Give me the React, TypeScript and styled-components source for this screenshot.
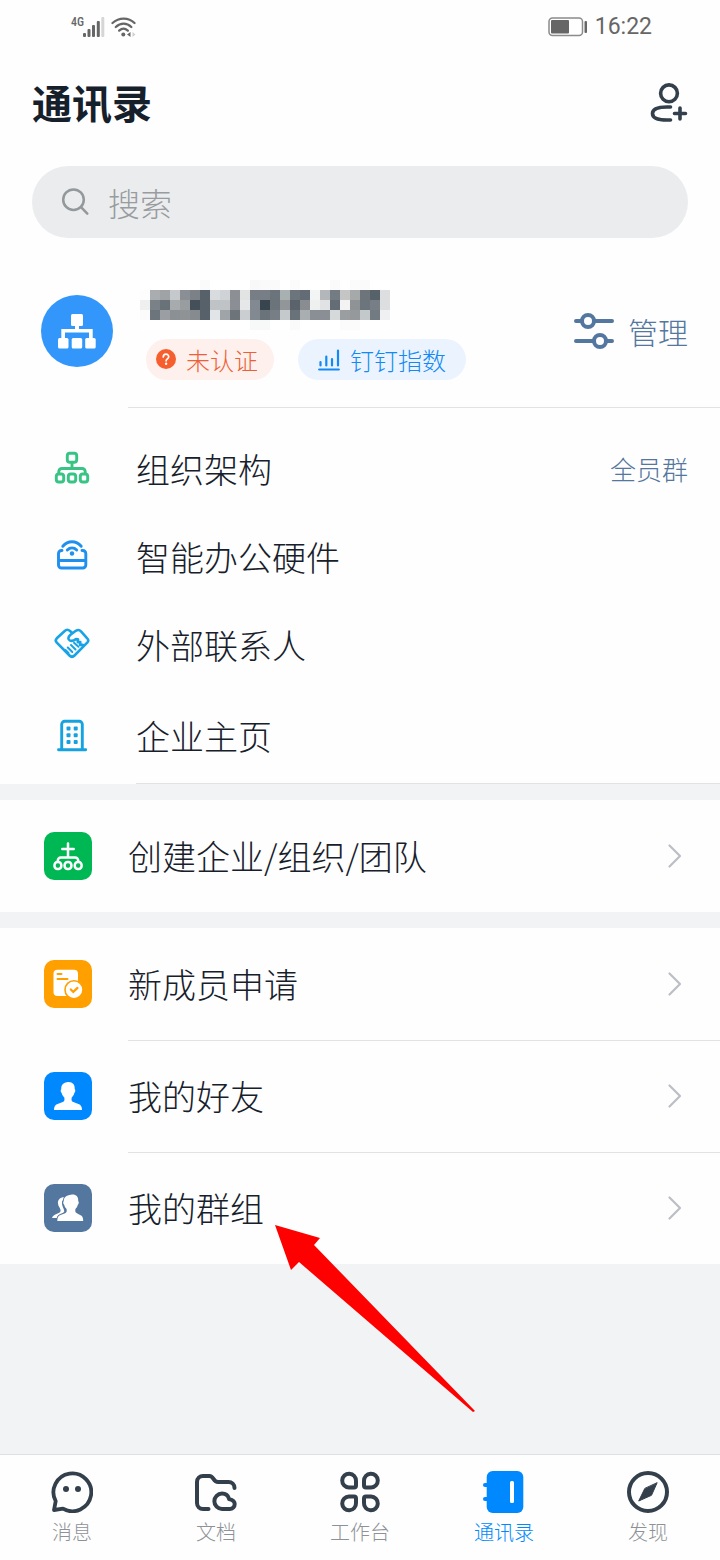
import React from "react";
import styled, { createGlobalStyle } from "styled-components";

const color = {
  ink: "#16202b",
  icon: "#333f4b",
  slate: "#53779f",
  muted: "#8e9296",
  blue: "#0089ff",
  line: "#e0e2e3",
  page: "#f2f3f5",
};

const GlobalStyle = createGlobalStyle`
  *, *::before, *::after { box-sizing: border-box; }
  body {
    margin: 0;
    background: ${color.page};
    color: ${color.ink};
    font-family: "Noto Sans CJK SC", Roboto, sans-serif;
    font-weight: 300;
  }
  button, input { font: inherit; color: inherit; }
  svg { display: block; flex: none; }
`;

const Page = styled.div`
  min-height: 100vh;
  display: flex;
  flex-direction: column;
`;

const Panel = styled.section`
  background: #fefefe;
`;

const StatusBar = styled.div`
  height: 54px;
  padding: 0 68px 0 71px;
  display: flex;
  align-items: center;
  justify-content: space-between;
  color: #666;
  font-family: Roboto, sans-serif;
`;

const StatusGroup = styled.div<{ $gap: number }>`
  display: flex;
  align-items: center;
  gap: ${(p) => p.$gap}px;
`;

const Network = styled.span`
  align-self: flex-start;
  width: 12px;
  font-size: 12px;
  line-height: 10px;
  font-weight: 500;
  font-family: "Roboto Condensed", Roboto, sans-serif;
`;

const Clock = styled.time`
  font-size: 23px;
  line-height: 28px;
  font-weight: 400;
`;

const Header = styled.header`
  height: 96px;
  padding: 0 32px;
  display: flex;
  align-items: center;
  justify-content: space-between;
`;

const Title = styled.h1`
  margin: 0;
  font-size: 40px;
  line-height: 48px;
  font-weight: 700;
`;

const PlainButton = styled.button`
  padding: 0;
  border: 0;
  background: none;
  cursor: pointer;
`;

const SearchBox = styled.label`
  height: 72px;
  margin: 16px 32px 0;
  padding: 0 28px;
  display: flex;
  align-items: center;
  gap: 18px;
  border-radius: 36px;
  background: #ebecee;
  color: #94989b;
`;

const SearchInput = styled.input`
  flex: 1;
  min-width: 0;
  height: 48px;
  padding: 0;
  border: 0;
  outline: 0;
  background: none;
  font-size: 32px;
  &::placeholder { color: #989c9f; opacity: 1; }
`;

const Organisation = styled.div`
  padding: 42px 32px 0 41px;
  height: 169px;
  display: flex;
`;

const Avatar = styled.div`
  width: 72px;
  height: 72px;
  margin-top: 15px;
  border-radius: 50%;
  background: #3296fa;
`;

const OrgDetails = styled.div`
  flex: 1;
  margin-left: 27px;
`;

const Chips = styled.div`
  display: flex;
  gap: 24px;
  margin: 9px 0 0 6px;
`;

const Chip = styled.button<{ $tone: "orange" | "blue" }>`
  height: 41px;
  display: flex;
  align-items: center;
  gap: 10px;
  padding: ${(p) => (p.$tone === "orange" ? "0 16px 0 10px" : "0 20px 0 20px")};
  border: 0;
  border-radius: 21px;
  background: ${(p) => (p.$tone === "orange" ? "#fef0ec" : "#ebf4fe")};
  color: ${(p) => (p.$tone === "orange" ? "#ec6038" : "#1289f5")};
  font-size: 24px;
  line-height: 32px;
  white-space: nowrap;
  cursor: pointer;
`;

const ManageButton = styled(PlainButton)`
  align-self: flex-start;
  margin-top: 29px;
  display: flex;
  align-items: center;
  gap: 14px;
  color: ${color.slate};
  font-size: 30px;
  line-height: 44px;
`;

const Divider = styled.hr<{ $inset: number }>`
  height: 1px;
  margin: 0 0 0 ${(p) => p.$inset}px;
  border: 0;
  background: ${color.line};
`;

const List = styled.ul<{ $top?: number }>`
  margin: 0;
  padding: ${(p) => p.$top ?? 0}px 0 0;
  list-style: none;
`;

const OrgItem = styled.li<{ $tall?: boolean }>`
  height: ${(p) => (p.$tall ? 94 : 88)}px;
  padding: 0 32px 0 54px;
  display: flex;
  align-items: center;
  justify-content: space-between;
`;

const OrgLink = styled.a`
  flex: 1;
  display: flex;
  align-items: center;
  gap: 46px;
  color: inherit;
  font-size: 34px;
  line-height: 48px;
  text-decoration: none;
`;

const SideLink = styled.a`
  color: ${color.slate};
  font-size: 26px;
  line-height: 36px;
  text-decoration: none;
`;

const Band = styled.div`
  height: 16px;
`;

const Row = styled.li`
  position: relative;
  & + & > a::before {
    content: "";
    position: absolute;
    top: 0;
    left: 128px;
    right: 0;
    height: 1px;
    background: ${color.line};
  }
`;

const RowLink = styled.a`
  height: 112px;
  padding: 0 36px 0 44px;
  display: flex;
  align-items: center;
  color: inherit;
  font-size: 34px;
  line-height: 48px;
  text-decoration: none;
`;

const RowLabel = styled.span`
  flex: 1;
  margin-left: 36px;
`;

const Tile = styled.span<{ $color: string }>`
  width: 48px;
  height: 48px;
  border-radius: 10px;
  background: ${(p) => p.$color};
`;

const Pointer = styled.svg`
  position: absolute;
  z-index: 1;
  left: 275px;
  top: 73px;
  pointer-events: none;
`;

const Spacer = styled.div`
  flex: 1;
  min-height: 16px;
`;

const TabBar = styled.nav`
  height: 106px;
  padding-top: 16px;
  display: flex;
  border-top: 1px solid #dddfe1;
  background: #fefefe;
`;

const Tab = styled.a<{ $active?: boolean }>`
  flex: 1;
  display: flex;
  flex-direction: column;
  align-items: center;
  gap: 7px;
  color: ${(p) => (p.$active ? color.blue : color.muted)};
  font-size: 20px;
  line-height: 24px;
  text-decoration: none;
`;

const SignalIcon = () => (
  <svg width="22" height="20" viewBox="0 0 22 20" fill="#666">
    <rect x="0" y="16" width="3" height="4" rx="1" />
    <rect x="4.500" y="12" width="3" height="8" rx="1" />
    <rect x="9" y="8" width="3" height="12" rx="1" />
    <rect x="13.800" y="4" width="3" height="16" rx="1" />
    <rect x="18.300" y="0" width="3" height="20" rx="1" fill="#d6d6d6" />
  </svg>
);

const WifiIcon = () => (
  <svg width="25" height="20" viewBox="0 0 25 20" fill="none" stroke="#666" strokeWidth="2.300" strokeLinecap="round">
    <path d="M1.500 6C8 .1 17.500.1 23.500 6M4.800 10C9.500 5.600 15.800 5.600 20.300 10M8.200 13.600C10.800 11.200 14.200 11.200 16.800 13.600" />
    <circle cx="12.300" cy="17.500" r="2" fill="#666" stroke="none" />
    <path d="M19.500 15v5l-3.500-2.500z" fill="#666" stroke="none" />
    <path d="M21.500 15v5l3-2.500z" fill="#d0d0d0" stroke="none" />
  </svg>
);

const BatteryIcon = () => (
  <svg width="40" height="20" viewBox="0 0 40 20" fill="none">
    <rect x="1" y="1" width="33.500" height="17.500" rx="3.500" stroke="#8b8b8b" strokeWidth="1.500" />
    <rect x="3" y="3" width="18" height="13.500" rx="1" fill="#666" />
    <rect x="36.500" y="4" width="2.500" height="12" rx="1" fill="#666" />
  </svg>
);

const AddContactIcon = () => (
  <svg width="40" height="44" viewBox="0 0 40 44" fill="none" stroke={color.icon} strokeWidth="3.600" strokeLinecap="round">
    <circle cx="21" cy="13.300" r="8.400" />
    <path d="M22.500 27H19C10 27 4.500 29 4.500 33.500S10 40 19 40h3.500" />
    <path d="M26.500 33.500h11M32 28v11" />
  </svg>
);

const SearchIcon = () => (
  <svg width="30" height="30" viewBox="0 0 30 30" fill="none" stroke="currentColor" strokeWidth="2.500" strokeLinecap="round">
    <circle cx="13.500" cy="12.700" r="10.300" />
    <path d="M21 20.200l6.300 6.500" />
  </svg>
);

const AvatarIcon = () => (
  <svg width="72" height="72" viewBox="0 0 72 72" fill="#fff">
    <rect x="30" y="19" width="12" height="12" rx="1.500" />
    <path d="M34 30h4v4h13.700v9H48v-5.500H24V43h-3.700v-9H34z" />
    <rect x="17" y="43" width="10.500" height="10.500" rx="1.500" />
    <rect x="30.700" y="43" width="10.500" height="10.500" rx="1.500" />
    <rect x="44.200" y="43" width="10.500" height="10.500" rx="1.500" />
  </svg>
);

const QuestionIcon = () => (
  <svg width="20" height="22" viewBox="0 0 20 22" fill="none">
    <circle cx="10" cy="10" r="10" fill="#f75e2e" />
    <path d="M7.300 8c0-3.700 5.400-3.700 5.400-.2 0 2.100-2.600 2-2.600 4" stroke="#fff" strokeWidth="1.700" strokeLinecap="round" />
    <circle cx="10.100" cy="14.800" r="1.200" fill="#fff" />
  </svg>
);

const IndexIcon = () => (
  <svg width="22" height="24" viewBox="0 0 22 24" fill="none" stroke="#1289f5" strokeWidth="2.200" strokeLinecap="round">
    <path d="M1.200 21.500h19.600M2.500 14v3.500M8.300 8.500v9M14 11v6.500M20 2.500v15" />
  </svg>
);

const SlidersIcon = () => (
  <svg width="40" height="38" viewBox="0 0 40 38" fill="none" stroke="currentColor" strokeWidth="4" strokeLinecap="round">
    <path d="M2 9h6M21 9h17M2 29h17M32 29h6" />
    <circle cx="14" cy="9" r="6" />
    <circle cx="26" cy="29" r="6" />
  </svg>
);

const StructureIcon = () => (
  <svg width="36" height="36" viewBox="0 0 36 36" fill="none" stroke="#37c485" strokeWidth="2.900" strokeLinecap="round">
    <rect x="13.300" y="2.300" width="9.400" height="9" rx="2.500" />
    <path d="M18 12v5M4.800 22v-1.500a3 3 0 0 1 3-3h20.400a3 3 0 0 1 3 3V22" />
    <rect x="2.300" y="23" width="7.400" height="8" rx="2.500" />
    <rect x="14.300" y="23" width="7.400" height="8" rx="2.500" />
    <rect x="26.300" y="23" width="7.400" height="8" rx="2.500" />
  </svg>
);

const DeviceIcon = () => (
  <svg width="36" height="38" viewBox="0 0 36 38" fill="none" stroke="#1f90ef" strokeWidth="2.900" strokeLinecap="round">
    <path d="M8.800 8.300C14 2.300 22 2.300 27.200 8.300M13.300 12C16 9.300 20 9.300 22.700 12" />
    <path d="M8 12.500H7.500a3 3 0 0 0-3 3V27a3 3 0 0 0 3 3h21.300a3 3 0 0 0 3-3V15.500a3 3 0 0 0-3-3h-.800M4.500 22.500h27" />
    <circle cx="18" cy="15.500" r="2.200" fill="#1f90ef" stroke="none" />
  </svg>
);

const HandshakeIcon = () => (
  <svg width="36" height="36" viewBox="0 0 36 36" fill="none" stroke="#18a3e6" strokeWidth="2.600" strokeLinecap="round" strokeLinejoin="round">
    <path d="M17.700 5.500l-1.700-1.500c-1.700-1.500-3.800-1.500-5.300 0L2.800 11.300c-1.300 1.400-1.300 3 0 4.300L15.500 28.500c1.600 1.600 3.400 1.600 5 0l12.700-12.900c1.300-1.400 1.300-3 0-4.300L27 4.300c-1.500-1.600-3.400-1.600-5.200-.5L16.200 8c-2.400 2-2.400 4.800-.2 5.600 2 .7 4-.1 6-1.500l2 .3-.2 2.800 2.500-.1-.2 2.800h2.400" />
    <path d="M17 18l4.500 4.500M13.800 20.500l4.500 4.500M20 15.800l4.500 4M11.500 23l3 3" strokeWidth="2" />
  </svg>
);

const BuildingIcon = () => (
  <svg width="36" height="36" viewBox="0 0 36 36" fill="none" stroke="#16a2df" strokeWidth="2.900" strokeLinecap="round">
    <path d="M4.500 31.700h27.200M7.700 31V6.300a3 3 0 0 1 3-3h14.600a3 3 0 0 1 3 3V31" />
    <g fill="#16a2df" stroke="none">
      {[8.5, 15.2, 22].map((y) => (
        <React.Fragment key={y}>
          <rect x="12.500" y={y} width="4" height="4" rx="1" />
          <rect x="19.700" y={y} width="4" height="4" rx="1" />
        </React.Fragment>
      ))}
    </g>
  </svg>
);

const CreateIcon = () => (
  <svg width="48" height="48" viewBox="0 0 48 48" fill="none" stroke="#fff" strokeWidth="2.500" strokeLinecap="round">
    <path d="M24 11.500V25M18.300 17h11.400M13.800 29v-.500a3 3 0 0 1 3-3h14.400a3 3 0 0 1 3 3V29" />
    <rect x="10.500" y="30" width="6.800" height="7" rx="3" />
    <rect x="20.600" y="30" width="6.800" height="7" rx="3" />
    <rect x="30.800" y="30" width="6.800" height="7" rx="3" />
  </svg>
);

const ApplyIcon = () => (
  <svg width="48" height="48" viewBox="0 0 48 48" fill="none" strokeLinecap="round">
    <rect x="9.500" y="9.700" width="24.500" height="26.300" rx="4" fill="#fff" />
    <path d="M13.500 14h4M13.500 19h10" stroke="#ffa000" strokeWidth="2" />
    <circle cx="30" cy="29.700" r="9" fill="#fff" stroke="#ffa000" strokeWidth="1.600" />
    <path d="M26.800 29.500l2.500 2.400 4.200-4" stroke="#ffa000" strokeWidth="2.200" />
  </svg>
);

const FriendIcon = () => (
  <svg width="48" height="48" viewBox="0 0 48 48" fill="#fff">
    <path d="M23 10.200c5-.9 8.200 2.200 7.700 7 1 .2.700 2.900-.4 3.900-.5 2-1.300 3.300-2.600 4.500-.4 2.700-.2 3.800 1.600 4.500l5.100 1.900c2.600.9 3.600 2.800 3.600 6H10c0-3.200 1-5.100 3.600-6l5.100-1.900c1.800-.7 2-1.800 1.600-4.500-1.300-1.200-2.100-2.500-2.600-4.500-1.100-1-1.400-3.700-.4-3.900-.4-3.700 1.700-6.500 5.700-7z" />
  </svg>
);

const GroupIcon = () => (
  <svg width="48" height="48" viewBox="0 0 48 48" fill="#fff">
    <path d="M21.500 13.500c-4.700-.8-8 2-7.500 6 .2 2.900 2 4 2.500 6.300.4 2.300-.7 2.900-4 4.200-2.600 1-4 2-4.500 4h5c1-3 6-4 7.200-6.300.5-2-2.200-4.700-2.200-8.700 0-2.500 1.500-4.500 3.500-5.500z" />
    <path d="M27 10.700c4.800-.7 7.700 2 7.200 6.500 1 .2.700 2.700-.4 3.600-.4 1.900-1.200 3.100-2.400 4.200-.3 2.500-.1 3.500 1.500 4.200l3.200 1.700c2.300.9 3.100 2.600 3.100 6.100H13.300c0-3.500.9-5.200 3.200-6.100l4.700-1.700c1.500-.7 1.700-1.700 1.400-4.200-1.200-1.100-2-2.300-2.400-4.200-1.100-.9-1.400-3.400-.4-3.600-.3-3.500 2.500-6.100 7.200-6.500z" stroke="#53779f" strokeWidth="2" paintOrder="stroke" />
  </svg>
);

const ChevronIcon = () => (
  <svg width="18" height="26" viewBox="0 0 18 26" fill="none" stroke="#bbbfc3" strokeWidth="2.200" strokeLinecap="round" strokeLinejoin="round">
    <path d="M3.500 2.500l10.500 10.500L3.500 23.500" />
  </svg>
);

const tabStroke = { width: 42, height: 42, viewBox: "0 0 42 42", fill: "none", stroke: color.icon, strokeWidth: 4, strokeLinecap: "round", strokeLinejoin: "round" } as const;

const MessageIcon = () => (
  <svg {...tabStroke}>
    <path d="M4.700 30.200A18.900 18.900 0 1 1 12 37.700L3 39z" strokeWidth="3.800" />
    <g fill={color.icon} stroke="none">
      <circle cx="15" cy="18" r="3" />
      <circle cx="27" cy="18" r="3" />
    </g>
  </svg>
);

const DocsIcon = () => (
  <svg {...tabStroke}>
    <path d="M13.500 38H8a6 6 0 0 1-6-6V11a6 6 0 0 1 6-6h6.500c4.500 0 3.500 6 8.500 6h10.500a6 6 0 0 1 6 6" />
    <path d="M27 22.600c4 0 6.300 2.400 7.200 5.500 3.200.7 5.500 2.300 5.500 5 0 2.900-2.100 4.800-5 4.800H27a7.650 7.650 0 1 1 0-15.300z" />
  </svg>
);

const WorkbenchIcon = () => (
  <svg {...tabStroke} strokeLinejoin="miter">
    <path d="M17 10v4.500a2 2 0 0 1-2 2h-5a6.900 6.900 0 1 1 7-6.500z" />
    <path d="M25 10v4.500a2 2 0 0 0 2 2h5a6.900 6.900 0 1 0-7-6.500z" />
    <path d="M17 32v-4.500a2 2 0 0 0-2-2h-5a6.900 6.900 0 1 0 7 6.500z" />
    <path d="M25 32v-4.500a2 2 0 0 1 2-2h5a6.900 6.900 0 1 1-7 6.500z" />
  </svg>
);

const ContactsIcon = () => (
  <svg width="42" height="42" viewBox="0 0 42 42" fill={color.blue}>
    <rect x="3.700" width="36.600" height="42" rx="6" />
    <rect x="0" y="12" width="6" height="4" rx="2" />
    <rect x="0" y="26" width="6" height="4" rx="2" />
    <rect x="27" y="10" width="4" height="22" rx="1.500" fill="#fff" />
  </svg>
);

const DiscoverIcon = () => (
  <svg {...tabStroke}>
    <circle cx="21" cy="21" r="19" />
    <path d="M30 12l-5.500 12.300L11.700 30l6-12.300z" fill={color.icon} stroke={color.icon} strokeWidth="1" />
  </svg>
);

const MASK_ROWS = [
  "ffffff ffffff ffffff ffffff ffffff ffffff fafafa ffffff ffffff ffffff ffffff f8f8f8 fafafa fafafa ffffff fbfbfb ffffff ffffff ffffff fafafa ffffff fbfbfb fafafa ffffff ffffff",
  "fdfdfd a9adb0 9fa3a6 c5c9cb 8a8e95 7b8187 57616a d9dcde cfd3d5 8c9095 e2e4e4 777e85 777e85 6c747b a9b0b2 6d757c 636b74 f3f4f4 b3b7ba 737b83 c5c5c6 a5a9aa 6d757b 57616a dcdedf",
  "eeefef 7a8187 697279 a7abad 9a9da0 444f59 57616a c0c3c5 c0c3c5 8b8e94 e6e7e8 828990 38444e 6c747b 929699 5a626c 898c91 eeefef e0e2e3 646d76 f3f3f4 8f9396 6d757c 777e85 dcdedf",
  "fbfbfb 6d757c 9b9ea2 8b9095 8f9396 868b90 57616a e2e5e7 9fa4a8 6d757b cbced1 828990 6a727a 777e85 c4c9cb 697179 a9afb1 8a8e95 8a8e95 d6d9da 9a9ea1 96999c c3c8ca 737b82 eff0f1",
  "ffffff ffffff ffffff ffffff ffffff ffffff ffffff ffffff ffffff ffffff ffffff f7f8f8 f7f8f8 ffffff ffffff fafafa ffffff ffffff ffffff ffffff fbfbfb fbfbfb ffffff ffffff ffffff",
].map((row) => row.split(" "));

const MaskedName = () => (
  <svg width="250" height="50" viewBox="0 0 250 50" shapeRendering="crispEdges" aria-hidden="true">
    {MASK_ROWS.map((row, y) =>
      row.map((fill, x) => <rect key={`${x}-${y}`} x={x * 10} y={y * 10} width="10" height="10" fill={`#${fill}`} />)
    )}
  </svg>
);

const orgItems = [
  { label: "组织架构", icon: <StructureIcon />, side: "全员群" },
  { label: "智能办公硬件", icon: <DeviceIcon /> },
  { label: "外部联系人", icon: <HandshakeIcon /> },
  { label: "企业主页", icon: <BuildingIcon />, tall: true },
];

const contactRows = [
  { label: "新成员申请", tile: "#ffa000", icon: <ApplyIcon /> },
  { label: "我的好友", tile: "#0089ff", icon: <FriendIcon /> },
  { label: "我的群组", tile: "#53779f", icon: <GroupIcon />, pointed: true },
];

const tabs = [
  { label: "消息", icon: <MessageIcon /> },
  { label: "文档", icon: <DocsIcon /> },
  { label: "工作台", icon: <WorkbenchIcon /> },
  { label: "通讯录", icon: <ContactsIcon />, active: true },
  { label: "发现", icon: <DiscoverIcon /> },
];

type ContactRowProps = { label: string; tile: string; icon: React.ReactNode; pointed?: boolean };

const ContactRow = ({ label, tile, icon, pointed }: ContactRowProps) => (
  <Row>
    <RowLink href="#">
      <Tile $color={tile}>{icon}</Tile>
      <RowLabel>{label}</RowLabel>
      <ChevronIcon />
    </RowLink>
    {pointed && (
      <Pointer width="200" height="188" viewBox="0 0 200 188" aria-hidden="true">
        <path d="M0 0L45 13L39 20L200 186L198 187L24 37L16 45Z" fill="#f00" />
      </Pointer>
    )}
  </Row>
);

export default function App() {
  return (
    <Page>
      <GlobalStyle />
      <Panel>
        <StatusBar>
          <StatusGroup $gap={6}>
            <StatusGroup $gap={0}>
              <Network>4G</Network>
              <SignalIcon />
            </StatusGroup>
            <WifiIcon />
          </StatusGroup>
          <StatusGroup $gap={7}>
            <BatteryIcon />
            <Clock>16:22</Clock>
          </StatusGroup>
        </StatusBar>
        <Header>
          <Title>通讯录</Title>
          <PlainButton type="button" aria-label="添加联系人">
            <AddContactIcon />
          </PlainButton>
        </Header>
        <SearchBox>
          <SearchIcon />
          <SearchInput type="search" placeholder="搜索" aria-label="搜索" />
        </SearchBox>
        <Organisation>
          <Avatar>
            <AvatarIcon />
          </Avatar>
          <OrgDetails>
            <MaskedName />
            <Chips>
              <Chip type="button" $tone="orange">
                <QuestionIcon />
                未认证
              </Chip>
              <Chip type="button" $tone="blue">
                <IndexIcon />
                钉钉指数
              </Chip>
            </Chips>
          </OrgDetails>
          <ManageButton type="button">
            <SlidersIcon />
            管理
          </ManageButton>
        </Organisation>
        <Divider $inset={128} />
        <List $top={17}>
          {orgItems.map((item) => (
            <OrgItem key={item.label} $tall={item.tall}>
              <OrgLink href="#">
                {item.icon}
                {item.label}
              </OrgLink>
              {item.side && <SideLink href="#">{item.side}</SideLink>}
            </OrgItem>
          ))}
        </List>
        <Divider $inset={136} />
      </Panel>
      <Band />
      <Panel>
        <List>
          <ContactRow label="创建企业/组织/团队" tile="#00b853" icon={<CreateIcon />} />
        </List>
      </Panel>
      <Band />
      <Panel>
        <List>
          {contactRows.map((row) => (
            <ContactRow key={row.label} {...row} />
          ))}
        </List>
      </Panel>
      <Spacer />
      <TabBar>
        {tabs.map((tab) => (
          <Tab key={tab.label} href="#" $active={tab.active}>
            {tab.icon}
            {tab.label}
          </Tab>
        ))}
      </TabBar>
    </Page>
  );
}
